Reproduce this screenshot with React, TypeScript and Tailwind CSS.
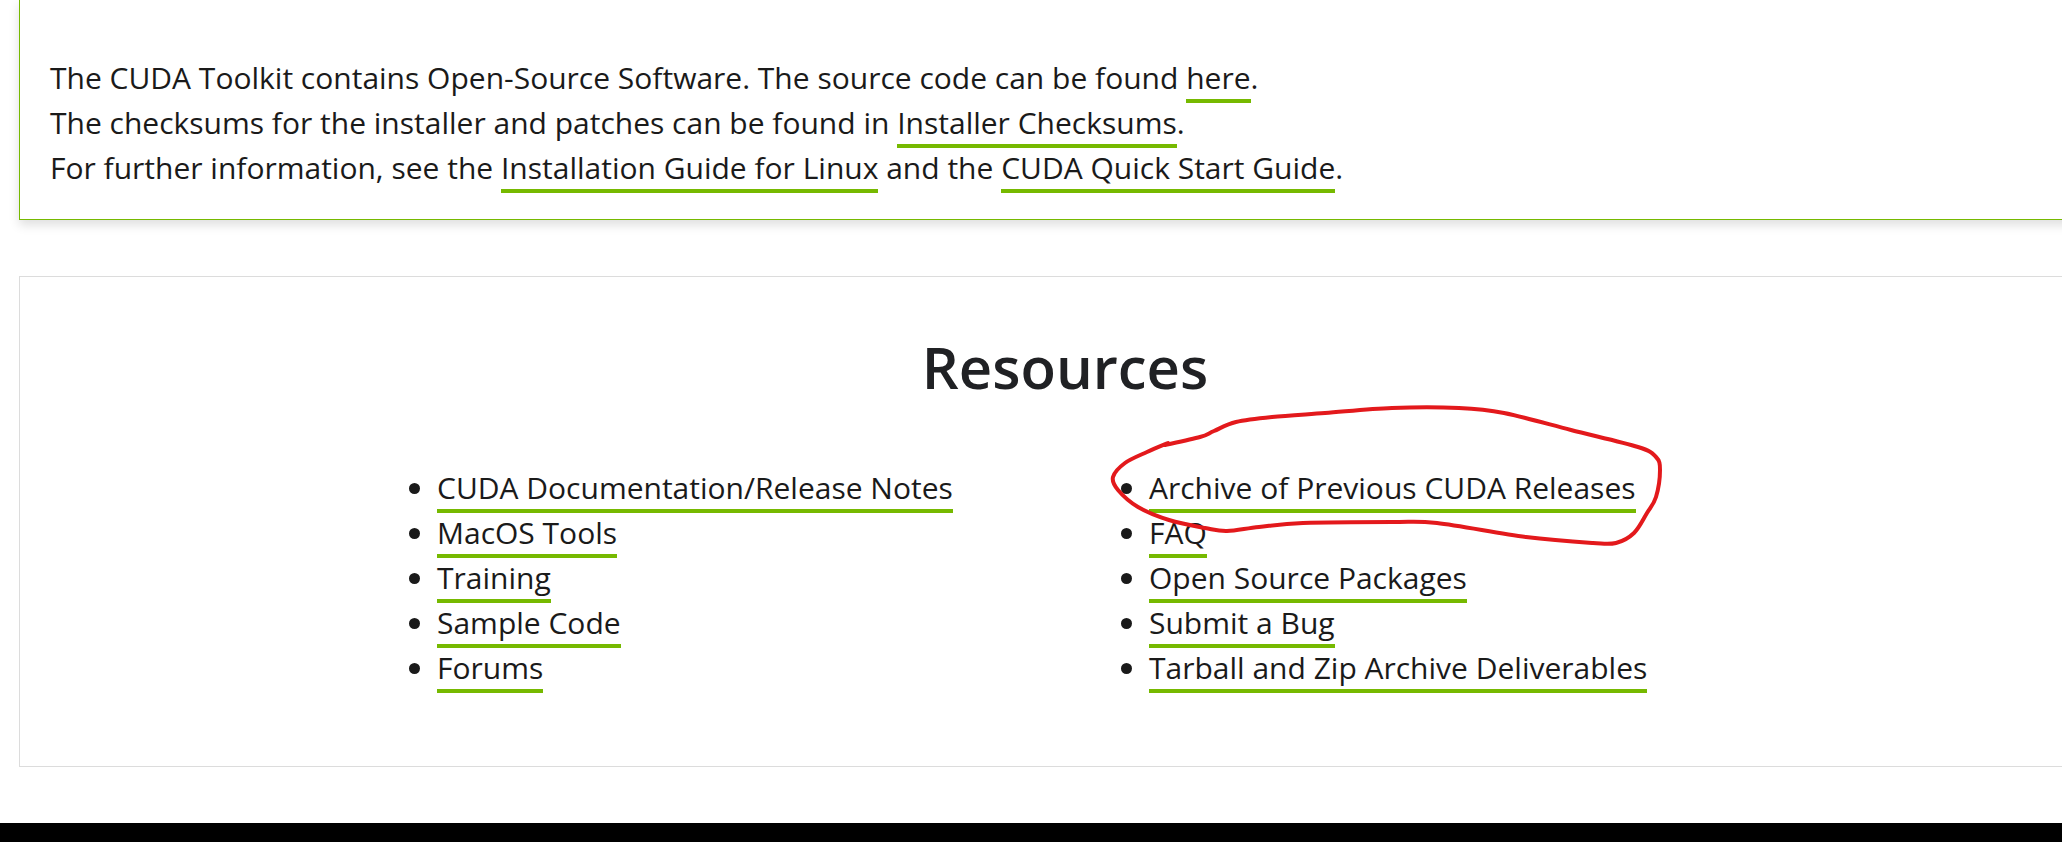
import React from 'react';

const font = { fontFamily: '"Open Sans", "Liberation Sans", sans-serif' };

const leftLinks = [
  'CUDA Documentation/Release Notes',
  'MacOS Tools',
  'Training',
  'Sample Code',
  'Forums',
];

const rightLinks = [
  'Archive of Previous CUDA Releases',
  'FAQ',
  'Open Source Packages',
  'Submit a Bug',
  'Tarball and Zip Archive Deliverables',
];

// hand-drawn marker loop, points in page pixels
const loop: [number, number][] = [
  [1165, 445], [1200, 437], [1214, 431], [1236, 422], [1272, 417], [1325, 413],
  [1392, 408], [1459, 408], [1504, 413], [1571, 430], [1638, 447], [1656, 457],
  [1660, 470], [1656, 497], [1647, 513], [1634, 533], [1616, 543], [1593, 543],
  [1526, 537], [1437, 523], [1392, 522], [1303, 523], [1259, 527], [1227, 531],
  [1205, 528], [1169, 520], [1138, 507], [1118, 490], [1113, 477], [1125, 463],
  [1147, 452], [1168, 443],
];

function smooth(pts: [number, number][]) {
  let d = `M${pts[0][0]} ${pts[0][1]}`;
  for (let i = 0; i < pts.length - 1; i++) {
    const p0 = pts[i - 1] || pts[i];
    const p1 = pts[i];
    const p2 = pts[i + 1];
    const p3 = pts[i + 2] || p2;
    const c1x = p1[0] + (p2[0] - p0[0]) / 6;
    const c1y = p1[1] + (p2[1] - p0[1]) / 6;
    const c2x = p2[0] - (p3[0] - p1[0]) / 6;
    const c2y = p2[1] - (p3[1] - p1[1]) / 6;
    d += ` C${c1x.toFixed(1)} ${c1y.toFixed(1)} ${c2x.toFixed(1)} ${c2y.toFixed(1)} ${p2[0]} ${p2[1]}`;
  }
  return d;
}

function Link({ children }: { children: React.ReactNode }) {
  return (
    <a href="#" className="text-[#1a1a1a] border-b-4 border-[#76b900] pb-[1px]">
      {children}
    </a>
  );
}

function LinkList({ items }: { items: string[] }) {
  return (
    <ul className="list-disc pl-[84px] text-[30px] leading-[45px] marker:text-[#1a1a1a]">
      {items.map((t) => (
        <li key={t}>
          <Link>{t}</Link>
        </li>
      ))}
    </ul>
  );
}

export default function App() {
  return (
    <div className="relative w-full h-[842px] overflow-hidden bg-white text-[#1a1a1a]" style={font}>
      <div className="pl-[19px]">
        <div className="w-[2092px] bg-white border-l border-b border-[#76b900] shadow-[0_5px_10px_rgba(0,0,0,0.13)] pt-[55px] pb-[29px] pl-[30px]">
          <p className="text-[30px] leading-[45px]">
            The CUDA Toolkit contains Open-Source Software. The source code can be found <Link>here</Link>.
            <br />
            The checksums for the installer and patches can be found in <Link>Installer Checksums</Link>.
            <br />
            For further information, see the <Link>Installation Guide for Linux</Link> and the{' '}
            <Link>CUDA Quick Start Guide</Link>.
          </p>
        </div>

        <div className="mt-[56px] w-[2092px] border border-[#dcdcdc] pt-[55px] pb-[76px]">
          <h2 className="text-center text-[58px] leading-[70px] font-semibold text-[#202124]">Resources</h2>
          <div className="mt-[63px] mx-auto w-[1424px] grid grid-cols-2">
            <LinkList items={leftLinks} />
            <LinkList items={rightLinks} />
          </div>
        </div>
      </div>

      <div className="absolute left-0 right-0 bottom-0 h-[19px] bg-black" />

      <svg className="absolute left-0 top-0 pointer-events-none" width="2062" height="842" viewBox="0 0 2062 842">
        <path d={smooth(loop)} fill="none" stroke="#e3191c" strokeWidth="4" strokeLinecap="round" strokeLinejoin="round" />
      </svg>
    </div>
  );
}
